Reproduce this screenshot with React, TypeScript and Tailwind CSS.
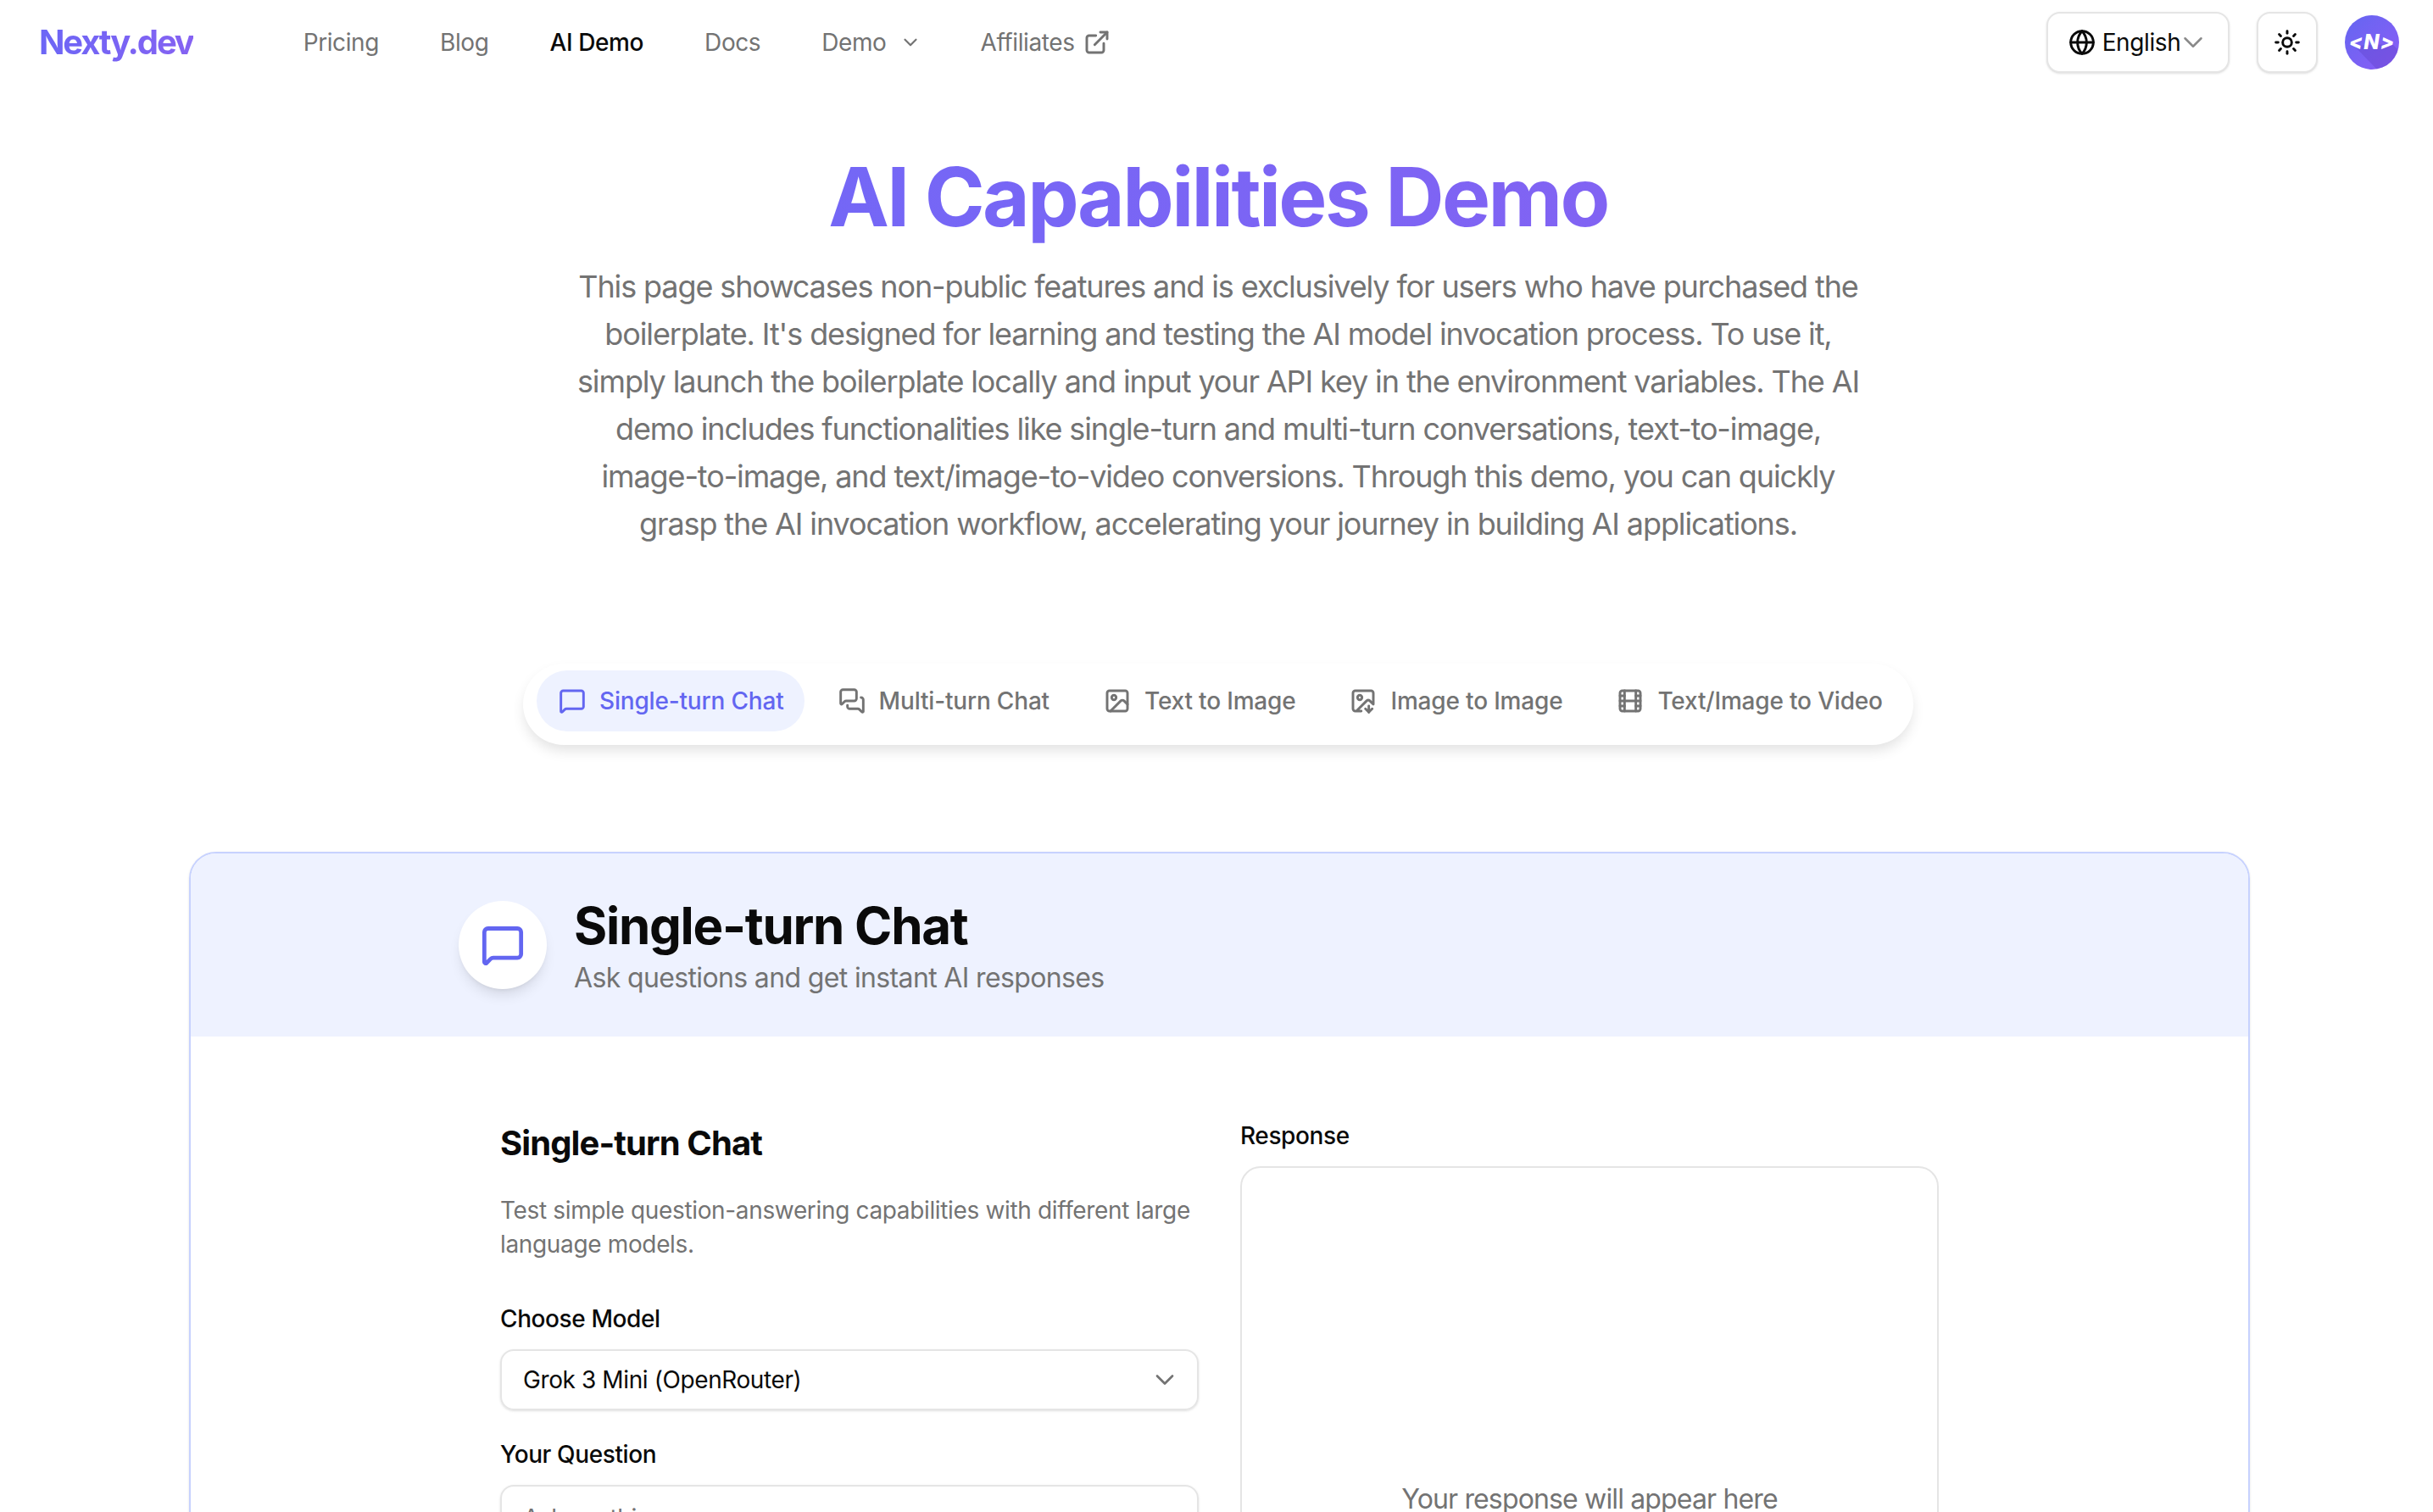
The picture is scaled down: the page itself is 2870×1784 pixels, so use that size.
import {
  ChevronDown,
  ExternalLink,
  Film,
  Globe,
  Image as ImageIcon,
  ImageDown,
  MessageSquare,
  MessagesSquare,
  Sun,
} from "lucide-react";
import React from "react";

const FONT = "font-['Inter','Noto_Sans',sans-serif]";

const navLinks = [
  { label: "Pricing", className: "ml-[130px]" },
  { label: "Blog", className: "ml-[72px]" },
  { label: "AI Demo", className: "ml-[72px] text-[#0a0a0a] font-medium" },
  { label: "Docs", className: "ml-[72px]" },
];

const tabs = [
  { label: "Multi-turn Chat", Icon: MessagesSquare },
  { label: "Text to Image", Icon: ImageIcon },
  { label: "Image to Image", Icon: ImageDown },
  { label: "Text/Image to Video", Icon: Film },
];

const Logo: React.FC = () => (
  <div className="relative w-[64px] h-[64px] rounded-full overflow-hidden bg-gradient-to-br from-[#6366f1] to-[#8b5cf6] flex items-center justify-center">
    <svg className="absolute inset-0" width="64" height="64" viewBox="0 0 64 64">
      <path d="M11 36 L56 34 L64 42 L64 64 L38 64 Z" fill="#5b3fc4" opacity="0.35" />
    </svg>
    <span className="relative text-white text-[24px] font-extrabold italic tracking-[1px] leading-none">
      {"<N>"}
    </span>
  </div>
);

const Navbar: React.FC = () => (
  <nav className="h-[100px] pl-[46px] pr-[40px] flex items-center text-[28px] tracking-[-0.4px] text-[#737373]">
    <span className="text-[40px] font-bold tracking-[-2.15px] bg-gradient-to-r from-[#6c66f6] to-[#8562f2] bg-clip-text text-transparent">
      Nexty.dev
    </span>
    {navLinks.map((l) => (
      <a key={l.label} className={l.className}>
        {l.label}
      </a>
    ))}
    <a className="ml-[72px] flex items-center gap-[15px]">
      Demo
      <ChevronDown size={26} strokeWidth={2} />
    </a>
    <a className="ml-[70px] flex items-center gap-[10px]">
      Affiliates
      <ExternalLink size={32} strokeWidth={2.2} />
    </a>
    <div className="ml-auto flex items-center">
      <button className="w-[216px] h-[72px] rounded-[16px] border-2 border-[#e5e5e5] shadow-sm flex items-center justify-center text-[#0a0a0a] bg-white">
        <Globe size={32} strokeWidth={2.2} />
        <span className="ml-[8px]">English</span>
        <ChevronDown size={38} strokeWidth={1.6} className="ml-[-4px] mr-[-2px] text-[#8a8a8a]" />
      </button>
      <button className="ml-[32px] w-[72px] h-[72px] rounded-[16px] border-2 border-[#e5e5e5] shadow-sm flex items-center justify-center text-[#0a0a0a] bg-white">
        <Sun size={32} strokeWidth={2.2} />
      </button>
      <div className="ml-[32px]">
        <Logo />
      </div>
    </div>
  </nav>
);

const Hero: React.FC = () => (
  <section className="flex flex-col items-center pl-[4px]">
    <h1 className="mt-[72px] text-[96px] leading-[120px] font-bold tracking-[-2.6px] bg-gradient-to-r from-[#7467f6] to-[#8163f3] bg-clip-text text-transparent">
      AI Capabilities Demo
    </h1>
    <p className="mt-[18px] w-[1536px] text-center text-[36px] leading-[56px] tracking-[-1.12px] text-[#737373]">
      This page showcases non-public features and is exclusively for users who have purchased the
      boilerplate. It's designed for learning and testing the AI model invocation process. To use it,
      simply launch the boilerplate locally and input your API key in the environment variables. The AI
      demo includes functionalities like single-turn and multi-turn conversations, text-to-image,
      image-to-image, and text/image-to-video conversions. Through this demo, you can quickly grasp the
      AI invocation workflow, accelerating your journey in building AI applications.
    </p>
  </section>
);

const TabBar: React.FC = () => (
  <div className="mt-[137px] flex justify-center pl-[4px]">
    <div className="w-[1640px] h-[96px] rounded-[48px] bg-white shadow-[0_8px_16px_-2px_rgba(0,0,0,0.12)] flex items-start pt-[8px] pl-[16px] text-[28px] font-medium tracking-[-0.18px] text-[#737373] whitespace-nowrap">
      <div className="h-[72px] pl-[26px] pr-[24px] mr-[8px] rounded-[36px] bg-[#eef2ff] text-[#6366f1] flex items-center gap-[16px]">
        <MessageSquare size={32} strokeWidth={2.2} />
        Single-turn Chat
      </div>
      {tabs.map(({ label, Icon }) => (
        <div key={label} className="h-[72px] px-[32px] flex items-center gap-[16px]">
          <Icon size={32} strokeWidth={2.2} />
          {label}
        </div>
      ))}
    </div>
  </div>
);

const Card: React.FC = () => (
  <div className="mt-[126px] ml-[223px] mr-[216px] rounded-t-[32px] border-2 border-[#c7d2fe] shadow-sm overflow-hidden h-[900px]">
    <div className="h-[216px] bg-[#eef2ff] pl-[316px] flex items-center">
      <div className="w-[104px] h-[104px] rounded-full bg-white shadow-lg flex items-center justify-center text-[#6366f1]">
        <MessageSquare size={52} strokeWidth={2.2} />
      </div>
      <div className="ml-[32px] pt-[3px]">
        <h2 className="text-[60px] leading-[68px] font-bold tracking-[-1.3px] text-[#0a0a0a]">Single-turn Chat</h2>
        <p className="mt-[6px] text-[32px] leading-[44px] tracking-[-0.64px] text-[#737373]">Ask questions and get instant AI responses</p>
      </div>
    </div>
    <div className="mt-[100px] pl-[365px] flex gap-[49px]">
      <div className="w-[824px]">
        <h3 className="text-[40px] leading-[52px] font-bold tracking-[-0.9px] text-[#0a0a0a]">Single-turn Chat</h3>
        <p className="mt-[33px] text-[28px] leading-[40px] tracking-[-0.35px] text-[#737373]">
          Test simple question-answering capabilities with different large language models.
        </p>
        <div className="mt-[48px] text-[28px] leading-[40px] font-medium tracking-[-0.4px] text-[#0a0a0a]">Choose Model</div>
        <div className="mt-[16px] h-[72px] rounded-[16px] border-2 border-[#e5e5e5] shadow-sm pl-[25px] pr-[20px] flex items-center justify-between text-[28px] tracking-[-0.4px] text-[#0a0a0a]">
          Grok 3 Mini (OpenRouter)
          <ChevronDown size={36} strokeWidth={1.8} className="text-[#737373]" />
        </div>
        <div className="mt-[32px] text-[28px] leading-[40px] font-medium tracking-[-0.4px] text-[#0a0a0a]">Your Question</div>
        <div className="mt-[16px] h-[200px] rounded-[16px] border-2 border-[#e5e5e5] shadow-sm px-[25px] py-[16px] text-[28px] tracking-[-0.4px] text-[#737373]">
          Ask anything...
        </div>
      </div>
      <div className="w-[824px]">
        <div className="mt-[-3px] text-[28px] leading-[40px] font-medium tracking-[-0.4px] text-[#0a0a0a]">Response</div>
        <div className="mt-[16px] h-[785px] rounded-[24px] border-2 border-[#e5e5e5] flex items-center justify-center text-[32px] tracking-[-0.85px] text-[#737373]">
          Your response will appear here
        </div>
      </div>
    </div>
  </div>
);

export default function App() {
  return (
    <div className={`${FONT} h-[1784px] overflow-hidden bg-white`}>
      <Navbar />
      <Hero />
      <TabBar />
      <Card />
    </div>
  );
}
